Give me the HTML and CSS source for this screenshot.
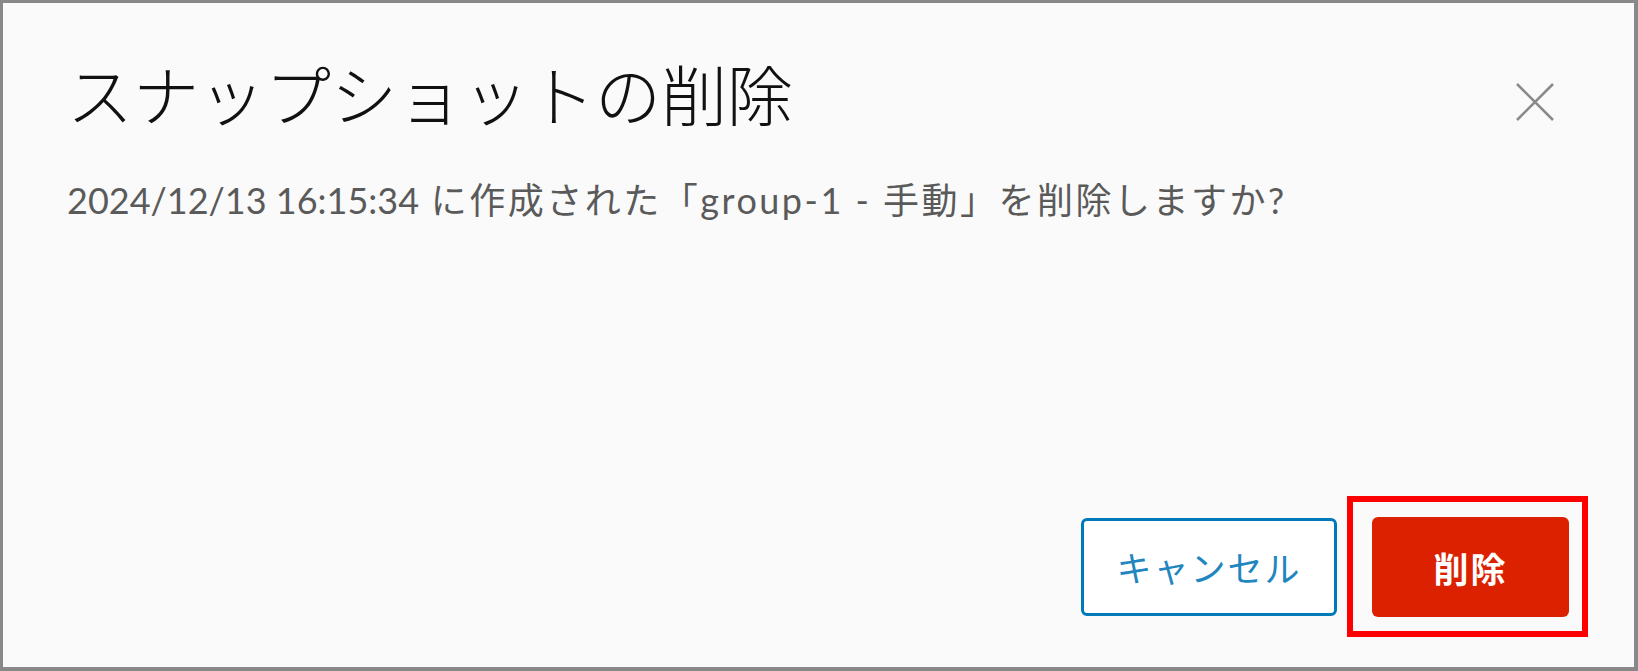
FILE: index.html
```html
<!DOCTYPE html>
<html lang="ja">
  <head>
    <meta charset="UTF-8" />
    <meta name="viewport" content="width=device-width, initial-scale=1.0" />
    <title>スナップショットの削除</title>

    <link rel="stylesheet" href="styles.css">
  </head>

  <body>
    <div class="modal">
      <div class="modal__header">
        <h3 class="modal__title">スナップショットの削除</h3>
        <button class="modal__close" aria-label="閉じる">
          <svg width="40" height="40" viewBox="0 0 40 40">
            <path d="M2 2 L38 38 M38 2 L2 38" stroke="#8a8a8a" stroke-width="2.6" fill="none" />
          </svg>
        </button>
      </div>

      <p class="modal__body"><time>2024/12/13 16:15:34</time> に作成された「group-1 - 手動」を削除しますか?</p>

      <div class="modal__footer">
        <button class="btn btn--outline">キャンセル</button>
        <div class="highlight">
          <button class="btn btn--danger">削除</button>
        </div>
      </div>
    </div>
  </body>
</html>
```

FILE: styles.css
```css
* {
  margin: 0;
  padding: 0;
  box-sizing: border-box;
}

body {
  background: #fafafa;
  font-family: "Lato", "Noto Sans CJK JP", sans-serif;
}

.modal {
  display: flex;
  flex-direction: column;
  width: 1638px;
  height: 671px;
  padding: 56px 46px 30px 64px;
  border: 3px solid #888;
  border-right-width: 4px;
  border-bottom-width: 4px;
  background: #fafafa;
}

.modal__header {
  display: flex;
  justify-content: space-between;
  align-items: flex-start;
}

.modal__title {
  font-family: "Noto Sans CJK JP", sans-serif;
  font-size: 66px;
  font-weight: 300;
  line-height: 66px;
  color: #111;
}

.modal__close {
  margin-top: 23px;
  margin-right: 33px;
  width: 40px;
  height: 40px;
  border: none;
  background: none;
  cursor: pointer;
}

.modal__close svg {
  display: block;
}

.modal__body {
  margin-top: 57px;
  font-size: 36px;
  line-height: 36px;
  letter-spacing: 2.5px;
  color: #5a5a5a;
}

.modal__body time {
  letter-spacing: 0;
}

.modal__footer {
  display: flex;
  justify-content: flex-end;
  align-items: center;
  gap: 10px;
  margin-top: auto;
}

.btn {
  font-family: "Noto Sans CJK JP", sans-serif;
  font-size: 35px;
  letter-spacing: 2px;
  border-radius: 6px;
  cursor: pointer;
}

.btn--outline {
  width: 256px;
  height: 98px;
  border: 3px solid #0079b8;
  background: #fff;
  color: #1f86c0;
}

.btn--danger {
  display: block;
  width: 197px;
  height: 100px;
  border: none;
  background: #db2100;
  color: #fff;
  font-weight: 700;
}

.highlight {
  padding: 15px 13px 14px 19px;
  border: 6px solid #ff0000;
}
```
